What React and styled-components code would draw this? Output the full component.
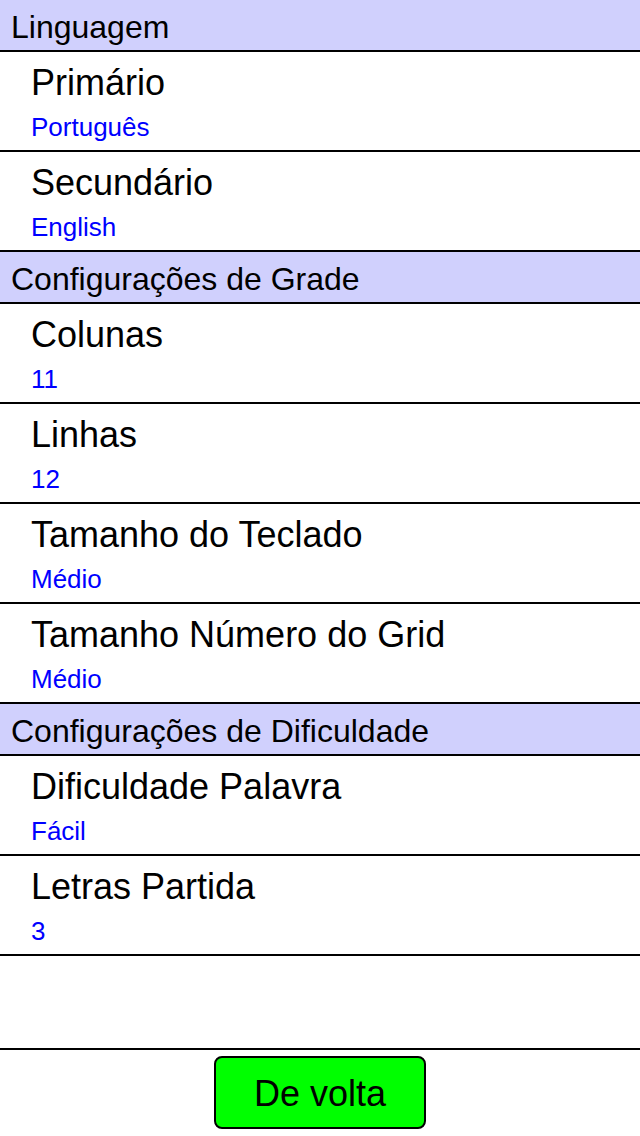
import React from "react";
import styled, { createGlobalStyle } from "styled-components";

const secoes = [
    {
        titulo: "Linguagem",
        itens: [
            { nome: "Primário", valor: "Português" },
            { nome: "Secundário", valor: "English" },
        ],
    },
    {
        titulo: "Configurações de Grade",
        itens: [
            { nome: "Colunas", valor: "11" },
            { nome: "Linhas", valor: "12" },
            { nome: "Tamanho do Teclado", valor: "Médio" },
            { nome: "Tamanho Número do Grid", valor: "Médio" },
        ],
    },
    {
        titulo: "Configurações de Dificuldade",
        itens: [
            { nome: "Dificuldade Palavra", valor: "Fácil" },
            { nome: "Letras Partida", valor: "3" },
        ],
    },
];

export default function App() {
    return (
        <>
            <Global />
            <Tela>
                <Lista>
                    {secoes.map((s) => (
                        <React.Fragment key={s.titulo}>
                            <Cabecalho>{s.titulo}</Cabecalho>
                            {s.itens.map((item) => (
                                <Linha key={item.nome}>
                                    <Nome>{item.nome}</Nome>
                                    <Valor>{item.valor}</Valor>
                                </Linha>
                            ))}
                        </React.Fragment>
                    ))}
                </Lista>
                <Rodape>
                    <Voltar>De volta</Voltar>
                </Rodape>
            </Tela>
        </>
    );
}

const Global = createGlobalStyle`
    body{
        margin:0;
        font-family:'Liberation Sans', Arial, sans-serif;
        background:#fff;
    }
`;

const Tela = styled.div`
    width:640px;
    height:1136px;
    display:flex;
    flex-direction:column;
    overflow:hidden;
`;

const Lista = styled.div`
    flex:1;
    display:flex;
    flex-direction:column;
`;

const Cabecalho = styled.div`
    height:48px;
    padding-top:2px;
    line-height:51px;
    padding-left:11px;
    background-color:#d0d0fd;
    border-bottom:2px solid #000;
    font-size:32px;
    color:#000;
    white-space:nowrap;
    overflow:hidden;
`;

const Linha = styled.div`
    height:98px;
    box-sizing:content-box;
    display:flex;
    flex-direction:column;
    padding-left:31px;
    border-bottom:2px solid #000;
`;

const Nome = styled.span`
    margin-top:11px;
    font-size:36px;
    line-height:40px;
    color:#000;
    white-space:nowrap;
`;

const Valor = styled.span`
    margin-top:9px;
    font-size:26px;
    line-height:30px;
    color:#0000ff;
`;

const Rodape = styled.div`
    height:88px;
    border-top:2px solid #000;
    display:flex;
    justify-content:center;
    padding-top:6px;
    box-sizing:border-box;
`;

const Voltar = styled.button`
    width:212px;
    height:73px;
    background-color:#00ff00;
    border:2px solid #000;
    border-radius:8px;
    font-family:'Liberation Sans', Arial, sans-serif;
    font-size:36px;
    color:#000;
    padding:3px 0 0 0;
`;
